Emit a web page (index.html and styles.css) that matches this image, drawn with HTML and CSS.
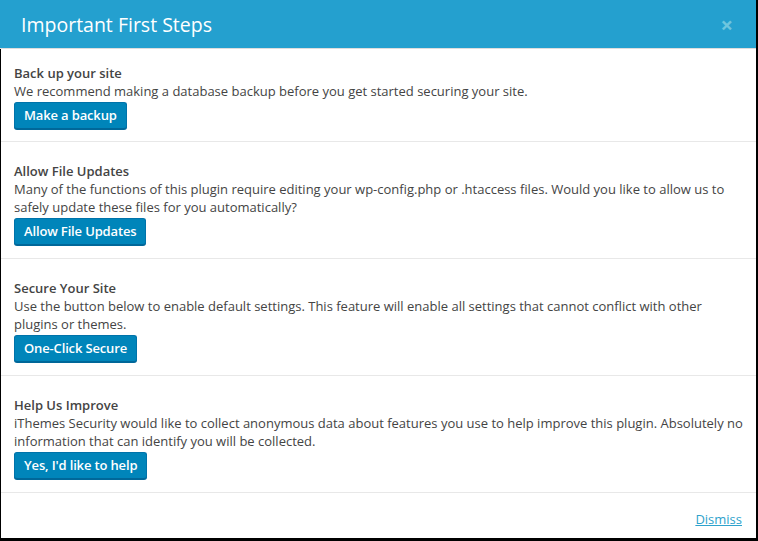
FILE: index.html
```html
<!DOCTYPE html>
<html lang="en">
<head>
    <meta charset="UTF-8">
    <title>Important First Steps</title>
    <link rel="stylesheet" href="styles.css">
</head>
<body>
<div class="modal">
    <div class="modal-header">
        <h1>Important First Steps</h1>
        <span class="close">&times;</span>
    </div>

    <div class="modal-body">
        <div class="step">
            <h3>Back up your site</h3>
            <p>We recommend making a database backup before you get started securing your site.</p>
            <button class="button">Make a backup</button>
        </div>
        <div class="step">
            <h3>Allow File Updates</h3>
            <p>Many of the functions of this plugin require editing your wp-config.php or .htaccess files. Would you like to allow us to safely update these files for you automatically?</p>
            <button class="button">Allow File Updates</button>
        </div>
        <div class="step">
            <h3>Secure Your Site</h3>
            <p>Use the button below to enable default settings. This feature will enable all settings that cannot conflict with other plugins or themes.</p>
            <button class="button">One-Click Secure</button>
        </div>
        <div class="step">
            <h3>Help Us Improve</h3>
            <p>iThemes Security would like to collect anonymous data about features you use to help improve this plugin. Absolutely no information that can identify you will be collected.</p>
            <button class="button">Yes, I'd like to help</button>
        </div>
        <div class="modal-footer">
            <a href="#" class="dismiss">Dismiss</a>
        </div>
    </div>
</div>
</body>
</html>
```

FILE: styles.css
```css
body {
    margin: 0;
    background: #000;
    font-family: 'Open Sans', sans-serif;
    font-size: 13px;
    color: #444;
    width: 758px;
    height: 541px;
    overflow: hidden;
}

.modal {
    width: 756px;
    height: 538px;
    background: #fff;
    display: flex;
    flex-direction: column;
}

.modal-header {
    background-color: #24a0cf;
    height: 48px;
    border-bottom: 1px solid #ddd;
    display: flex;
    align-items: center;
    justify-content: space-between;
    padding: 0 23px 0 21px;
}

.modal-header h1 {
    margin: 0;
    color: #fff;
    font-size: 19.5px;
    font-weight: 400;
}

.close {
    color: #6fc6de;
    font-size: 22px;
    font-weight: 700;
    line-height: 1;
}

.modal-body {
    flex: 1;
    border-left: 1px solid #000;
    display: flex;
    flex-direction: column;
}

.step {
    padding: 15px 8px 12px 13px;
    border-bottom: 1px solid #e8e8e8;
}

.step + .step {
    padding-top: 20px;
    padding-bottom: 13px;
}

.step h3 {
    margin: 0;
    font-size: 13px;
    font-weight: 600;
    line-height: 18px;
    color: #444;
}

.step p {
    margin: 0 0 2px;
    line-height: 18px;
}

.button {
    font-family: 'Open Sans', sans-serif;
    font-size: 13px;
    font-weight: 600;
    letter-spacing: -0.15px;
    color: #fff;
    background: #0085ba;
    border: 1px solid #0073aa;
    border-bottom-color: #006799;
    box-shadow: 0 1px 0 #006799;
    border-radius: 3px;
    height: 27px;
    line-height: 24px;
    padding: 0 9px 1px;
    cursor: pointer;
}

.modal-footer {
    flex: 1;
    display: flex;
    justify-content: flex-end;
    align-items: flex-end;
    padding: 0 14px 10px;
}

.dismiss {
    color: #2ea2cc;
    text-decoration: underline;
}
```
